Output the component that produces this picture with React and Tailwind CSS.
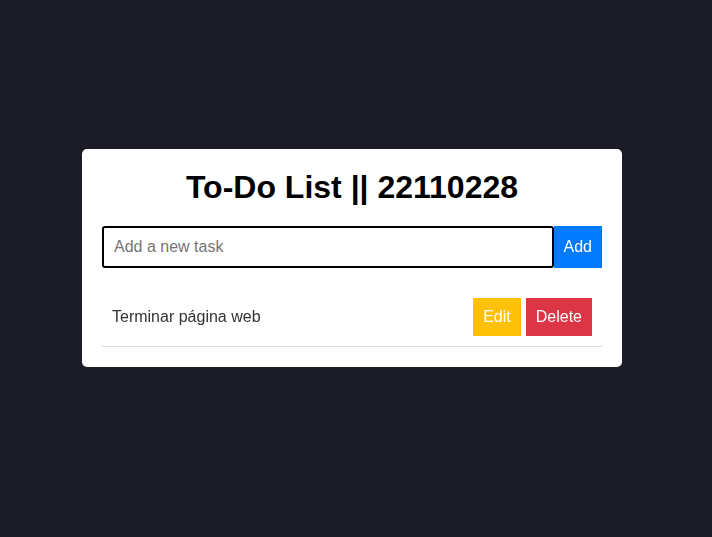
import React, { useState } from 'react';

const App = () => {
  const [tasks] = useState(['Terminar página web']);

  return (
    <div className="min-h-[537px] bg-[#1c1c27] pt-[149px] pl-[82px] font-['Liberation_Sans',Arial,sans-serif]">
      <div className="w-[540px] bg-white rounded-[5px] p-5">
        <h1 className="text-[32px] leading-[37px] font-bold text-center text-black mb-5">To-Do List || 22110228</h1>

        {/* Input row */}
        <div className="flex">
          <input
            type="text"
            autoFocus
            placeholder="Add a new task"
            className="flex-1 h-[42px] px-[10px] text-base border-2 border-black rounded-[3px] outline-none caret-black placeholder:text-[#757575]"
          />
          <button className="bg-[#007bff] text-white text-base px-[10px]">Add</button>
        </div>

        {/* Task list */}
        <ul className="mt-5">
          {tasks.map((task, index) => (
            <li key={index} className="flex items-center justify-between p-[10px] border-b border-[#dddddd]">
              <span className="text-base text-[#333]">{task}</span>
              <div className="flex gap-[5px]">
                <button className="bg-[#ffc107] text-white text-base px-[10px] h-[38px]">Edit</button>
                <button className="bg-[#dc3545] text-white text-base px-[10px] h-[38px]">Delete</button>
              </div>
            </li>
          ))}
        </ul>
      </div>
    </div>
  );
};

export default App;
